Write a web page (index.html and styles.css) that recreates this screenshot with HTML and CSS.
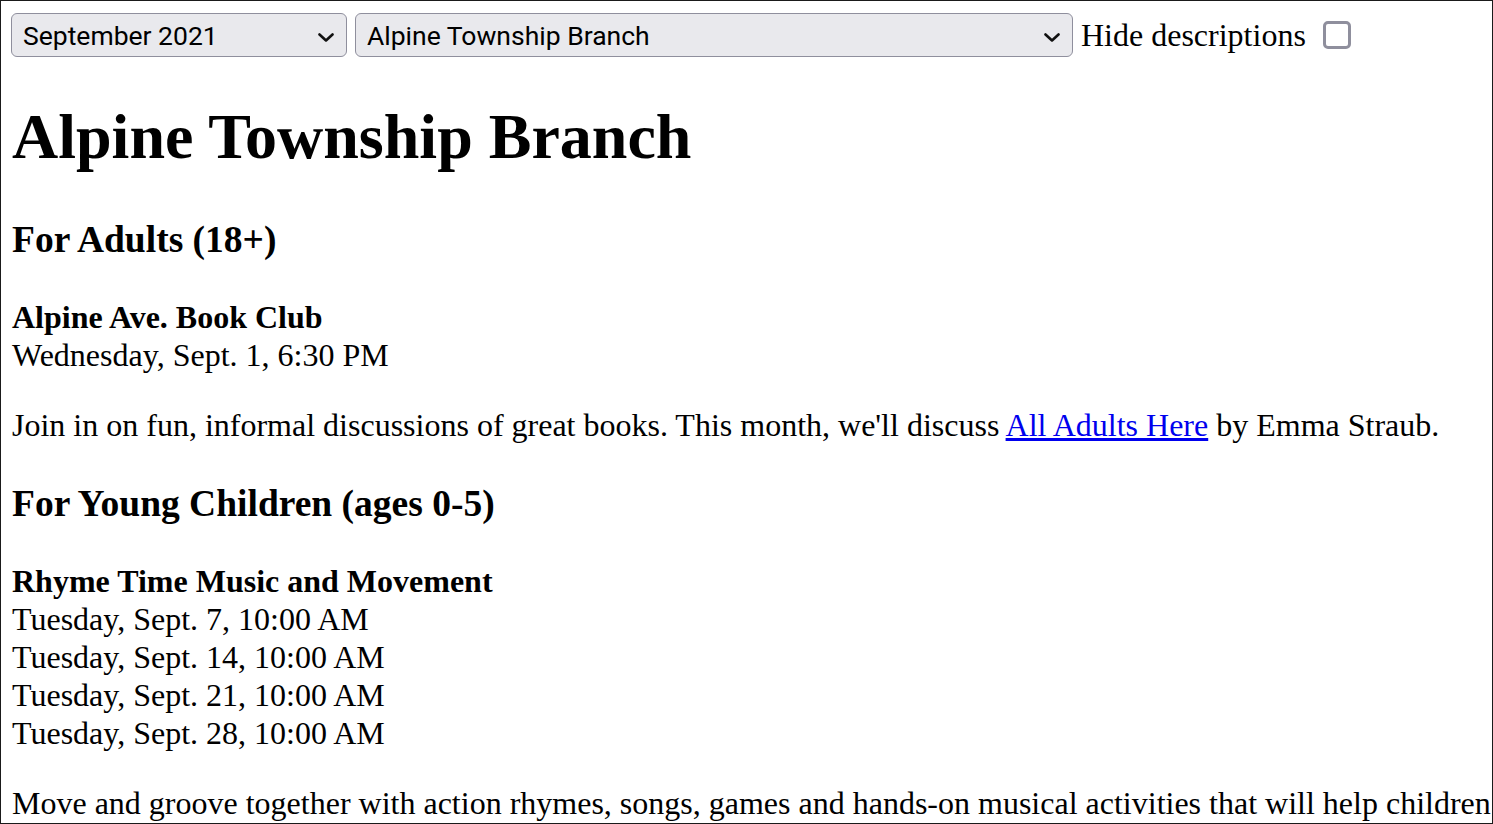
FILE: index.html
```html
<!DOCTYPE html>
<html lang="en">
<head>
<meta charset="utf-8">
<title>Alpine Township Branch</title>
<link rel="stylesheet" href="styles.css">
</head>
<body>
<div class="frame">
  <div class="page">
    <form class="filters">
      <span class="select-wrap select-month">
        <select class="select">
          <option>September 2021</option>
        </select>
        <svg class="chev" viewBox="0 0 16 9" width="16" height="9" aria-hidden="true"><polyline points="1.5,1.5 8,7.5 14.5,1.5" fill="none" stroke="#111" stroke-width="2.6" stroke-linecap="round" stroke-linejoin="round"/></svg>
      </span>
      <span class="select-wrap select-branch">
        <select class="select">
          <option>Alpine Township Branch</option>
        </select>
        <svg class="chev" viewBox="0 0 16 9" width="16" height="9" aria-hidden="true"><polyline points="1.5,1.5 8,7.5 14.5,1.5" fill="none" stroke="#111" stroke-width="2.6" stroke-linecap="round" stroke-linejoin="round"/></svg>
      </span>
      <label class="hide-label" for="hide">Hide descriptions</label>
      <input class="check" type="checkbox" id="hide">
    </form>

    <h1 class="branch">Alpine Township Branch</h1>

    <h3 class="audience">For Adults (18+)</h3>
    <div class="event">
      <div class="event-title">Alpine Ave. Book Club</div>
      <div class="event-date">Wednesday, Sept. 1, 6:30 PM</div>
      <p class="event-desc">Join in on fun, informal discussions of great books. This month, we'll discuss <a href="#">All Adults Here</a> by Emma Straub.</p>
    </div>

    <h3 class="audience">For Young Children (ages 0-5)</h3>
    <div class="event">
      <div class="event-title">Rhyme Time Music and Movement</div>
      <div class="event-date">Tuesday, Sept. 7, 10:00 AM</div>
      <div class="event-date">Tuesday, Sept. 14, 10:00 AM</div>
      <div class="event-date">Tuesday, Sept. 21, 10:00 AM</div>
      <div class="event-date">Tuesday, Sept. 28, 10:00 AM</div>
      <p class="event-desc">Move and groove together with action rhymes, songs, games and hands-on musical activities that will help children develop early literacy skills.</p>
    </div>
  </div>
</div>
</body>
</html>
```

FILE: styles.css
```css
html, body {
  margin: 0;
  padding: 0;
  background: #fff;
}

.frame {
  box-sizing: border-box;
  width: 1493px;
  height: 824px;
  border: 1px solid #1a1a1a;
  overflow: hidden;
  padding: 12px 0 0 11px;
}

.page {
  font-family: "Liberation Serif", "Times New Roman", serif;
  font-size: 32px;
  line-height: 38px;
  color: #000;
}

.filters {
  display: flex;
  align-items: center;
  height: 44px;
  margin-left: -1px;
}

.select-wrap {
  position: relative;
  display: block;
  height: 44px;
}

.select-month { width: 336px; }
.select-branch { width: 718px; margin-left: 8px; }

.select {
  -webkit-appearance: none;
  appearance: none;
  box-sizing: border-box;
  width: 100%;
  height: 44px;
  margin: 0;
  padding: 1px 40px 0 11px;
  border: 1.5px solid #8f8f9d;
  border-radius: 6px;
  background: #e9e9ed;
  color: #000;
  font-family: Roboto, "Liberation Sans", sans-serif;
  font-size: 26.5px;
}

.chev {
  position: absolute;
  right: 13px;
  top: 20px;
  pointer-events: none;
}

.hide-label {
  margin-left: 8px;
}

.check {
  -webkit-appearance: none;
  appearance: none;
  box-sizing: border-box;
  width: 28px;
  height: 28px;
  margin: 0 0 0 17px;
  border: 3px solid #8f8f9d;
  border-radius: 5px;
  background: #fff;
}

.branch {
  font-size: 64px;
  line-height: 74px;
  font-weight: bold;
  margin: 43px 0 44px;
}

.audience {
  font-size: 37.5px;
  line-height: 43px;
  font-weight: bold;
  margin: 38px 0 37px;
}

.event-title {
  font-weight: bold;
}

.event-desc {
  margin: 32px 0 0;
}

.event-desc a {
  color: #0000ee;
  text-decoration: underline;
}
```
